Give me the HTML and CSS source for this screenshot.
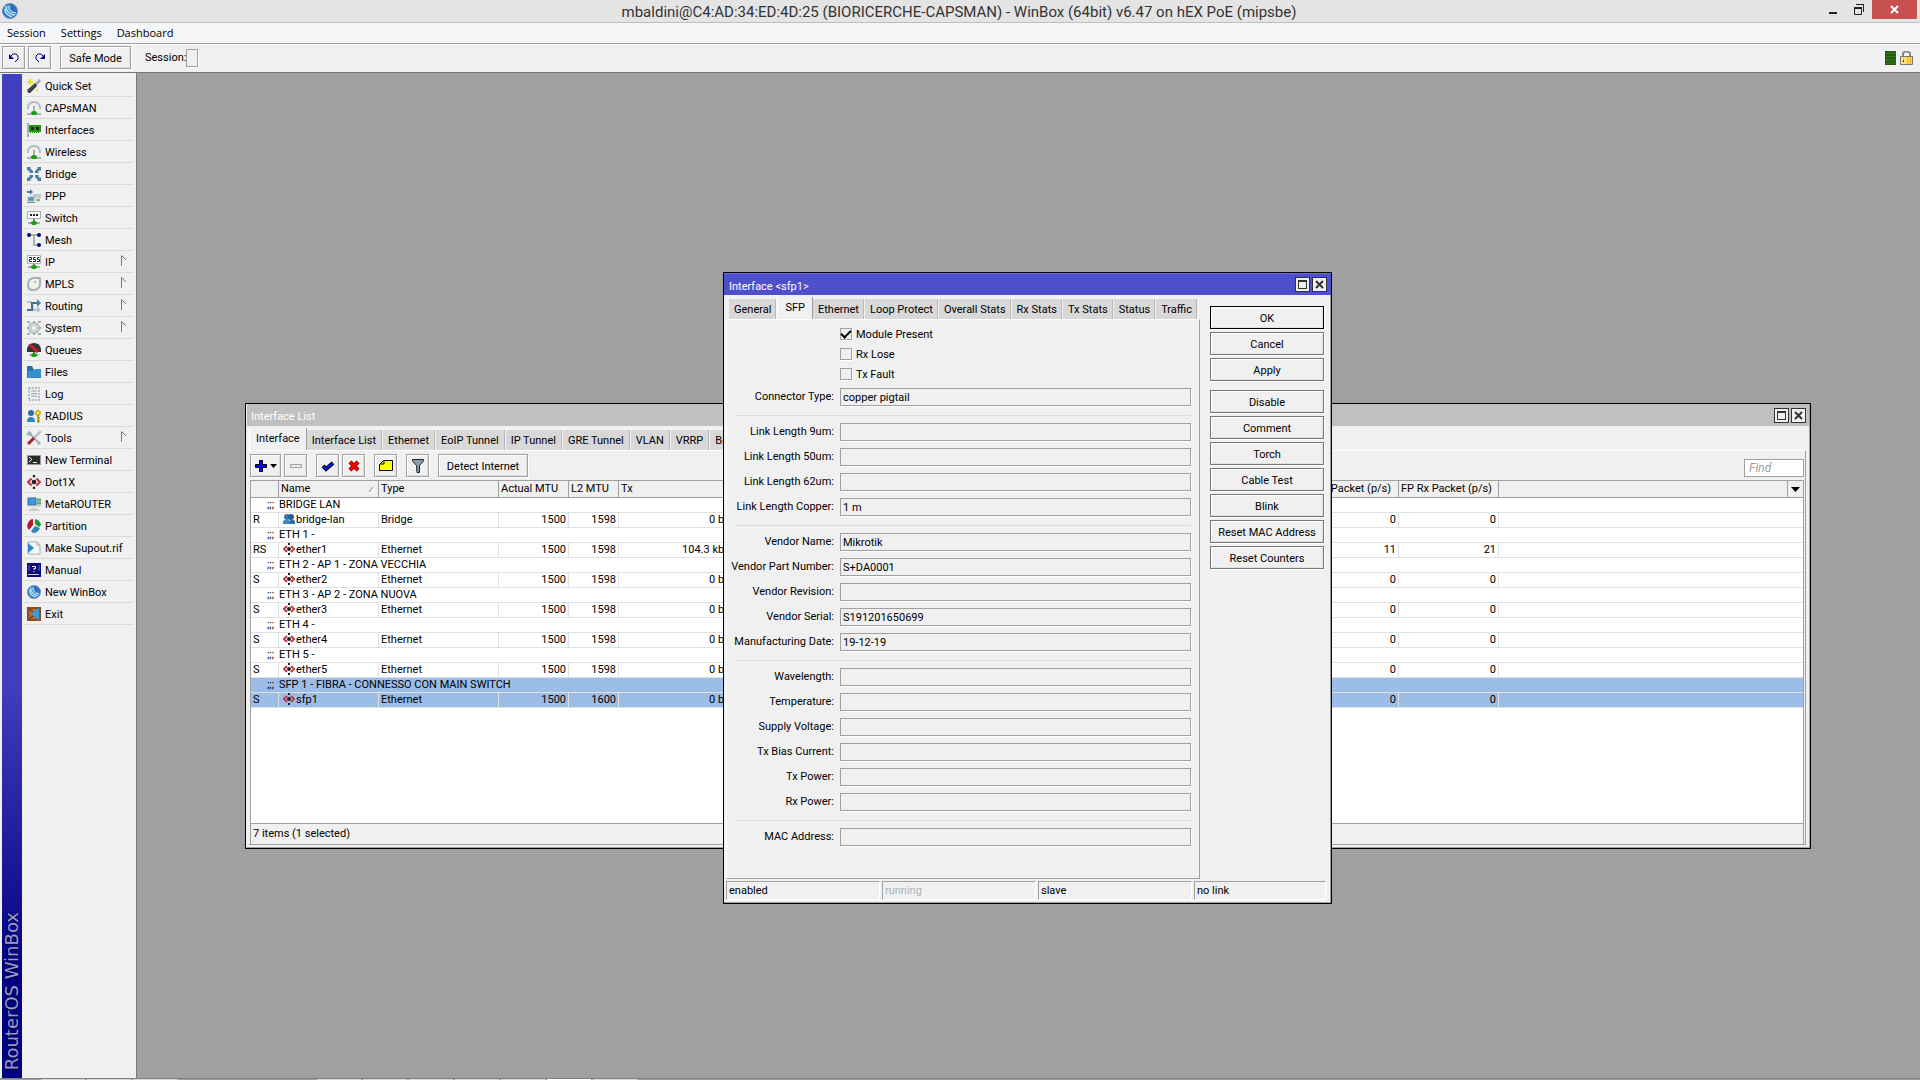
FILE: index.html
```html
<!DOCTYPE html>
<html lang="en">
<head>
<meta charset="utf-8">
<title>WinBox</title>
<link rel="stylesheet" href="styles.css">
</head>
<body>
<svg class="defs" aria-hidden="true">
  <symbol id="i-wand" viewBox="0 0 14 14"><path d="M0 13 L8 5 L10 7 L3 14 Z" fill="#222"/><path d="M0 11 L8 4 L10 6 L3 13 Z" fill="#444"/><path d="M8 4 L12 0 L14 2 L10 6 Z" fill="#999"/><path d="M9 4 L12 1" stroke="#ddd"/><path d="M3 0V6M0 3H6M10 10V12M9 11H11" stroke="#e3e31a" stroke-width="2"/></symbol>
  <symbol id="i-cap" viewBox="0 0 14 14"><path d="M1 8V6Q2 1 7 1T13 6V8" fill="none" stroke="#b4bfbd" stroke-width="2"/><path d="M7 5V11" stroke="#a4b2b0" stroke-width="2"/><path d="M0 13H14" stroke="#777"/><ellipse cx="7" cy="12" rx="3" ry="2" fill="#18a010"/></symbol>
  <symbol id="i-nic" viewBox="0 0 14 14"><path d="M0 0H2V14H0Z" fill="#a4b2b0"/><path d="M2 2H14V9H2Z" fill="#1f9a0c"/><path d="M4 4H7V7H4ZM9 4H12V7H9Z" fill="#222"/><path d="M3 9.500H13" stroke="#1f9a0c" stroke-dasharray="1 1"/></symbol>
  <symbol id="i-bridge" viewBox="0 0 14 14"><g fill="#4e7c9e"><path d="M0 0H4L3 1L6 4V2V6H2L3 5L1 3L0 4Z"/><path d="M14 0H10L11 1L8 4V2V6H12L11 5L13 3L14 4Z"/><path d="M0 14H4L3 13L6 10V12V8H2L3 9L1 11L0 10Z"/><path d="M14 14H10L11 13L8 10V12V8H12L11 9L13 11L14 10Z"/></g></symbol>
  <symbol id="i-ppp" viewBox="0 0 14 14"><path d="M0 3H4" stroke="#4e7c9e" stroke-width="2"/><path d="M3 0L6 3L3 6Z" fill="#4e7c9e"/><path d="M6 5H14V9H6Z" fill="#c2c9c8"/><path d="M1 8H7V12H1Z" fill="#3b99d8" stroke="#a4b2b0"/><path d="M9 9H13V13H9Z" fill="#ddd"/><path d="M9 11H13" stroke="#18a010"/><path d="M0 13.500H8" stroke="#888"/></symbol>
  <symbol id="i-switch" viewBox="0 0 14 14"><path d="M.5 .5H13.500V7.500H.5Z" fill="#fff" stroke="#a4b2b0"/><path d="M3 4H11" stroke="#222" stroke-width="2" stroke-dasharray="2 1"/><path d="M7 8V11" stroke="#777" stroke-width="2"/><path d="M1 12H13" stroke="#666"/><ellipse cx="7" cy="12" rx="3" ry="2" fill="#18a010"/></symbol>
  <symbol id="i-mesh" viewBox="0 0 14 14"><path d="M2 2H12M7 2V12H12" fill="none" stroke="#a4b2b0" stroke-width="2"/><circle cx="2" cy="2" r="2" fill="#0a0a80"/><circle cx="12" cy="2" r="2" fill="#0a0a80"/><circle cx="12" cy="12" r="2" fill="#0a0a80"/></symbol>
  <symbol id="i-ip" viewBox="0 0 14 14"><path d="M.5 .5H13.500V8.500H.5Z" fill="#fff" stroke="#a4b2b0"/><path d="M2 2.500H4.500V4.500H2.500V6.500H5M8.500 2.500H6.500V4.500H8.500V6.500H6M12.500 2.500H10.500V4.500H12.500V6.500H10" fill="none" stroke="#222"/><path d="M7 9V11" stroke="#777" stroke-width="2"/><path d="M1 12H13" stroke="#666"/><ellipse cx="7" cy="12" rx="3" ry="2" fill="#18a010"/></symbol>
  <symbol id="i-mpls" viewBox="0 0 14 14"><path d="M6 1H13V8Q12 13 6 13Q1 13 1 8Q1 2 6 1Z" fill="#eef1f0" stroke="#a4b2b0" stroke-width="2" stroke-linejoin="round"/><circle cx="8" cy="5" r="1" fill="#a4b2b0"/></symbol>
  <symbol id="i-routing" viewBox="0 0 14 14"><path d="M0 3H4L7 11H11" fill="none" stroke="#a9c8dc" stroke-width="2"/><path d="M10 7L14 11L10 14Z" fill="#a9c8dc"/><path d="M0 11H5V4H11" fill="none" stroke="#3f7296" stroke-width="2"/><path d="M10 0L14 4L10 8Z" fill="#2b8ac9"/></symbol>
  <symbol id="i-gear" viewBox="0 0 14 14"><circle cx="7" cy="7" r="5" fill="#eee" stroke="#b4bfbd" stroke-width="2"/><circle cx="7" cy="7" r="3" fill="none" stroke="#b4bfbd"/><path d="M0 1H3M11 1H14M0 13H3M11 13H14M0 7H2M12 7H14M7 0V2M7 12V14" stroke="#a4b2b0" stroke-width="2"/></symbol>
  <symbol id="i-queue" viewBox="0 0 14 14"><path d="M0 9V6Q1 0 7 0T14 6V9Z" fill="#333"/><path d="M3 2L11 9" stroke="#c8202a" stroke-width="3"/><path d="M7 9V12" stroke="#777" stroke-width="2"/><path d="M2 12H12" stroke="#888"/><ellipse cx="7" cy="12" rx="3" ry="2" fill="#18a010"/></symbol>
  <symbol id="i-files" viewBox="0 0 14 14"><path d="M0 1H5L7 5H14V13H0Z" fill="#2373b0"/><path d="M1 13V6H6L8 4H14V12Z" fill="#3a90cc"/></symbol>
  <symbol id="i-log" viewBox="0 0 14 14"><path d="M2 1H12V13H2Z" fill="#eef1f0" stroke="#b4bfbd" stroke-dasharray="2 1" stroke-width="2"/><path d="M4 4H10M4 6.500H10M4 9H10" stroke="#93a3a0"/></symbol>
  <symbol id="i-radius" viewBox="0 0 14 14"><circle cx="4" cy="4" r="3" fill="#2d6f96"/><path d="M0 13Q0 8 4 8T8 13Z" fill="#2f86c0"/><circle cx="11" cy="4" r="2" fill="none" stroke="#c9bb14" stroke-width="2"/><path d="M11 6V14M11 9H13M11 12H13" stroke="#b8a80c" stroke-width="2"/></symbol>
  <symbol id="i-tools" viewBox="0 0 14 14"><path d="M2 2L12 12" stroke="#a4b2b0" stroke-width="2"/><path d="M0 2V4L2 5L5 3L4 1L2 0M10 12L12 14L14 12L12 10" fill="#a4b2b0"/><path d="M7 7L14 0" stroke="#b4bfbd" stroke-width="2"/><path d="M1 13L7 7" stroke="#a8202c" stroke-width="3"/></symbol>
  <symbol id="i-term" viewBox="0 0 14 14"><path d="M0 2H14V12H0Z" fill="#999"/><path d="M1 3H13V11H1Z" fill="#2c2c2c"/><path d="M2 4L5 6.500L2 9M6 9.500H10" fill="none" stroke="#eee"/></symbol>
  <symbol id="i-eth" viewBox="0 0 12 12"><path d="M4 3L1 6L4 9M8 3L11 6L8 9" fill="none" stroke="#c03a4a" stroke-width="2"/><circle cx="6" cy="6" r="2" fill="#222"/><path d="M6 0V2M6 10V12" stroke="#222" stroke-width="2"/></symbol>
  <symbol id="i-meta" viewBox="0 0 14 14"><path d="M1 1H9V8H1Z" fill="#3e9ae0" stroke="#2c6ca0"/><path d="M10 1H14V8H10Z" fill="#b4bfbd"/><path d="M10 3H14M10 6H14" stroke="#18a010"/><path d="M0 9H14" stroke="#bbb"/><path d="M1 14Q2 11 7 11T13 14Z" fill="#c5cdcb"/></symbol>
  <symbol id="i-part" viewBox="0 0 14 14"><path d="M6 0V6L2 11Q-1 8 1 4T6 0Z" fill="#b01c2c"/><path d="M8 0Q13 1 14 6L12 8L8 5Z" fill="#1a9a2a"/><path d="M8 7L13 9Q11 14 6 14L4 12Z" fill="#2d86c4"/></symbol>
  <symbol id="i-supout" viewBox="0 0 14 14"><path d="M1 1H10L13 4V13H1Z" fill="#f6f8f7" stroke="#a4b2b0"/><path d="M10 1V4H13" fill="none" stroke="#a4b2b0"/><path d="M1 2L7 7L1 12Z" fill="#2b88c8"/></symbol>
  <symbol id="i-manual" viewBox="0 0 14 14"><path d="M0 0H14V14H0Z" fill="#0a0a7c"/><path d="M2 2V8M12 2V8" stroke="#6a6ac0"/><path d="M5 3.500H8.500V5.500H7V7M7 8V9" fill="none" stroke="#fff"/><path d="M1 11.500H12" stroke="#ccd"/></symbol>
  <symbol id="i-winbox" viewBox="0 0 16 16"><circle cx="8" cy="8" r="7.500" fill="#2d72b8" stroke="#6b93b8"/><path d="M2 5Q4 2 8 2Q5 8 13 11Q12 14 8 14Q1 12 2 5" fill="#5aa6e2"/><path d="M4 3Q4 11 13 12M7 3Q7 9 14 10M3 6Q3 12 10 14" fill="none" stroke="#e6f3fc"/></symbol>
  <symbol id="i-exit" viewBox="0 0 14 14"><path d="M0 0H14V14H0Z" fill="#8f4e22"/><path d="M2 2H12V12H2Z" fill="#b06a34"/><path d="M2 2L6 5M2 12L6 9" stroke="#4c2a12"/><path d="M12 1V13L4 7Z" fill="#2e9ee0"/></symbol>
  <symbol id="i-people" viewBox="0 0 12 12"><circle cx="4" cy="4" r="3" fill="#3578a4"/><circle cx="8" cy="4" r="3" fill="#235f8a"/><path d="M0 11V8Q4 5 7 8V11Z" fill="#3c8cc4"/><path d="M6 11V8Q10 5 12 8V11Z" fill="#2b74aa"/></symbol>
  <symbol id="i-undo" viewBox="0 0 12 12"><path d="M1 2V7H6Z" fill="#000080"/><path d="M2 5L5 2H8L10 4V7L7 10" fill="none" stroke="#000080"/></symbol>
  <symbol id="i-redo" viewBox="0 0 12 12"><path d="M11 2V7H6Z" fill="#000080"/><path d="M10 5L7 2H4L2 4V7L5 10" fill="none" stroke="#000080"/></symbol>
  <symbol id="i-max" viewBox="0 0 9 9"><path d="M0 0H9V9H0Z" fill="#333"/><path d="M1 2H8V8H1Z" fill="#eee"/></symbol>
  <symbol id="i-x" viewBox="0 0 9 9"><path d="M1 1L8 8M8 1L1 8" stroke="#333" stroke-width="2"/></symbol>
  <symbol id="i-arrow" viewBox="0 0 6 11"><path d="M.5 11V.5L5 5" fill="none" stroke="#777"/><path d="M1 10L5.500 5" stroke="#fff"/></symbol>
</svg>

<div class="app">
  <header class="titlebar">
    <svg class="logo"><use href="#i-winbox"/></svg>
    <h1 class="title">mbaldini@C4:AD:34:ED:4D:25 (BIORICERCHE-CAPSMAN) - WinBox (64bit) v6.47 on hEX PoE (mipsbe)</h1>
    <div class="sysbuttons">
      <button class="sys" aria-label="Minimize"><svg width="12" height="12"><path d="M2 8H10V10H2Z" fill="#222"/></svg></button>
      <button class="sys" aria-label="Restore"><svg width="12" height="12"><path d="M1.500 3.500H8.500V10.500H1.500Z" fill="none" stroke="#222"/><path d="M1 3H9V5H1ZM3 0H11V8H10V1H3Z" fill="#222"/></svg></button>
      <button class="sys sys-close" aria-label="Close"><svg width="9" height="9"><path d="M1 1L8 8M8 1L1 8" stroke="#fff" stroke-width="2"/></svg></button>
    </div>
  </header>

  <nav class="menubar">
    <a href="#">Session</a><a href="#">Settings</a><a href="#">Dashboard</a>
  </nav>

  <div class="toolbar">
    <button class="btn square" aria-label="Undo"><svg width="12" height="12"><use href="#i-undo"/></svg></button>
    <button class="btn square" aria-label="Redo"><svg width="12" height="12"><use href="#i-redo"/></svg></button>
    <button class="btn safe">Safe Mode</button>
    <div class="session-field"><label for="session">Session:</label><input class="session" id="session" readonly></div>
    <div class="indicators">
      <svg width="11" height="14"><path d="M0 0H11V14H0Z" fill="#265a12"/><path d="M1 2H11M1 5.500H11M1 9H11M1 12H11" stroke="#357a1c"/></svg>
      <svg width="13" height="14"><path d="M3 5V2Q6.500-1 10 2V5" fill="none" stroke="#8a8a8a" stroke-width="2"/><path d="M.5 5.500H12.500V13.500H.5Z" fill="#f8d84c" stroke="#777"/><path d="M2 6V13M5 6V13" stroke="#fff3a0"/><path d="M8 6V13M10.500 6V13" stroke="#f0ae30"/><path d="M3 9H4V11H3Z" fill="#333"/></svg>
    </div>
  </div>

  <div class="workspace">
    <div class="brand"><span>RouterOS WinBox</span></div>
    <nav class="sidebar">
      <a href="#"><svg><use href="#i-wand"/></svg>Quick Set</a>
      <a href="#"><svg><use href="#i-cap"/></svg>CAPsMAN</a>
      <a href="#"><svg><use href="#i-nic"/></svg>Interfaces</a>
      <a href="#"><svg><use href="#i-cap"/></svg>Wireless</a>
      <a href="#"><svg><use href="#i-bridge"/></svg>Bridge</a>
      <a href="#"><svg><use href="#i-ppp"/></svg>PPP</a>
      <a href="#"><svg><use href="#i-switch"/></svg>Switch</a>
      <a href="#"><svg><use href="#i-mesh"/></svg>Mesh</a>
      <a href="#"><svg><use href="#i-ip"/></svg>IP<svg class="more"><use href="#i-arrow"/></svg></a>
      <a href="#"><svg><use href="#i-mpls"/></svg>MPLS<svg class="more"><use href="#i-arrow"/></svg></a>
      <a href="#"><svg><use href="#i-routing"/></svg>Routing<svg class="more"><use href="#i-arrow"/></svg></a>
      <a href="#"><svg><use href="#i-gear"/></svg>System<svg class="more"><use href="#i-arrow"/></svg></a>
      <a href="#"><svg><use href="#i-queue"/></svg>Queues</a>
      <a href="#"><svg><use href="#i-files"/></svg>Files</a>
      <a href="#"><svg><use href="#i-log"/></svg>Log</a>
      <a href="#"><svg><use href="#i-radius"/></svg>RADIUS</a>
      <a href="#"><svg><use href="#i-tools"/></svg>Tools<svg class="more"><use href="#i-arrow"/></svg></a>
      <a href="#"><svg><use href="#i-term"/></svg>New Terminal</a>
      <a href="#"><svg><use href="#i-eth"/></svg>Dot1X</a>
      <a href="#"><svg><use href="#i-meta"/></svg>MetaROUTER</a>
      <a href="#"><svg><use href="#i-part"/></svg>Partition</a>
      <a href="#"><svg><use href="#i-supout"/></svg>Make Supout.rif</a>
      <a href="#"><svg><use href="#i-manual"/></svg>Manual</a>
      <a href="#"><svg><use href="#i-winbox"/></svg>New WinBox</a>
      <a href="#"><svg><use href="#i-exit"/></svg>Exit</a>
    </nav>

    <main class="desktop">
      <section class="window list-window">
        <div class="wintitle"><h2>Interface List</h2>
          <button class="winbtn" aria-label="Maximize"><svg width="9" height="9"><use href="#i-max"/></svg></button>
          <button class="winbtn" aria-label="Close"><svg width="9" height="9"><use href="#i-x"/></svg></button>
        </div>
        <div class="tabs">
          <button class="tab active">Interface</button><button class="tab">Interface List</button><button class="tab">Ethernet</button><button class="tab">EoIP Tunnel</button><button class="tab">IP Tunnel</button><button class="tab">GRE Tunnel</button><button class="tab">VLAN</button><button class="tab">VRRP</button><button class="tab">Bonding</button>
        </div>
        <div class="list-panel">
          <div class="list-tools">
            <button class="btn add" aria-label="Add"><svg width="22" height="12"><path d="M4.500 .5H7.500V4.500H11.500V7.500H7.500V11.500H4.500V7.500H.5V4.500H4.500Z" fill="#00f" stroke="#000"/><path d="M15 4H22L18.500 8Z"/></svg></button>
            <button class="btn square group-end" aria-label="Remove"><svg width="12" height="12"><path d="M.5 4.500H11.500V7.500H.5Z" fill="#eee" stroke="#a0a0a0"/></svg></button>
            <button class="btn square" aria-label="Enable"><svg width="12" height="12"><path d="M1 6L4 9L11 3" fill="none" stroke="#000" stroke-width="4"/><path d="M1 6L4 9L11 3" fill="none" stroke="#0026ff" stroke-width="2"/></svg></button>
            <button class="btn square group-end" aria-label="Disable"><svg width="12" height="12"><path d="M2 2L10 10M10 2L2 10" stroke="#400" stroke-width="4"/><path d="M2 2L10 10M10 2L2 10" stroke="#f00" stroke-width="3"/></svg></button>
            <button class="btn square group-end" aria-label="Comment"><svg width="14" height="12"><path d="M.5 10.500V4.500L4.500 .5H13.500V10.500Z" fill="#ff0" stroke="#000"/><path d="M5 1V4H1" fill="none" stroke="#000"/></svg></button>
            <button class="btn square group-end" aria-label="Filter"><svg width="12" height="14"><path d="M.5 .5H11.500V2L7.500 6.500V13.500H5L4.500 6.500L.5 2Z" fill="#8c9ab8" stroke="#222"/></svg></button>
            <button class="btn detect">Detect Internet</button>
            <input class="find" type="text" placeholder="Find" aria-label="Find">
          </div>
          <div class="grid-box">
            <table class="grid">
              <colgroup><col class="c-flag"><col class="c-name"><col class="c-type"><col class="c-mtu"><col class="c-l2"><col class="c-tx"><col class="c-mid"><col class="c-pkt"><col class="c-pkt"><col><col class="c-drop"></colgroup>
              <thead><tr><th></th><th>Name<svg class="sort" width="6" height="7"><path d="M.5 6.500L5.500 .5" stroke="#888"/><path d="M5.500 .5V6.500H0" fill="none" stroke="#fff"/></svg></th><th>Type</th><th>Actual MTU</th><th>L2 MTU</th><th>Tx</th><th></th><th>FP Tx Packet (p/s)</th><th>FP Rx Packet (p/s)</th><th></th><th><button class="drop" aria-label="Columns"><svg width="9" height="5"><path d="M0 0H9L4.500 5Z"/></svg></button></th></tr></thead>
              <tbody>
                <tr class="note"><td colspan="11"><span class="mark">;;;</span>BRIDGE LAN</td></tr>
                <tr><td>R</td><td><svg><use href="#i-people"/></svg>bridge-lan</td><td>Bridge</td><td>1500</td><td>1598</td><td>0 bps</td><td></td><td>0</td><td>0</td><td colspan="2"></td></tr>
                <tr class="note"><td colspan="11"><span class="mark">;;;</span>ETH 1 -</td></tr>
                <tr><td>RS</td><td><svg><use href="#i-eth"/></svg>ether1</td><td>Ethernet</td><td>1500</td><td>1598</td><td>104.3 kbps</td><td></td><td>11</td><td>21</td><td colspan="2"></td></tr>
                <tr class="note"><td colspan="11"><span class="mark">;;;</span>ETH 2 - AP 1 - ZONA VECCHIA</td></tr>
                <tr><td>S</td><td><svg><use href="#i-eth"/></svg>ether2</td><td>Ethernet</td><td>1500</td><td>1598</td><td>0 bps</td><td></td><td>0</td><td>0</td><td colspan="2"></td></tr>
                <tr class="note"><td colspan="11"><span class="mark">;;;</span>ETH 3 - AP 2 - ZONA NUOVA</td></tr>
                <tr><td>S</td><td><svg><use href="#i-eth"/></svg>ether3</td><td>Ethernet</td><td>1500</td><td>1598</td><td>0 bps</td><td></td><td>0</td><td>0</td><td colspan="2"></td></tr>
                <tr class="note"><td colspan="11"><span class="mark">;;;</span>ETH 4 -</td></tr>
                <tr><td>S</td><td><svg><use href="#i-eth"/></svg>ether4</td><td>Ethernet</td><td>1500</td><td>1598</td><td>0 bps</td><td></td><td>0</td><td>0</td><td colspan="2"></td></tr>
                <tr class="note"><td colspan="11"><span class="mark">;;;</span>ETH 5 -</td></tr>
                <tr><td>S</td><td><svg><use href="#i-eth"/></svg>ether5</td><td>Ethernet</td><td>1500</td><td>1598</td><td>0 bps</td><td></td><td>0</td><td>0</td><td colspan="2"></td></tr>
                <tr class="note selected"><td colspan="11"><span class="mark">;;;</span>SFP 1 - FIBRA - CONNESSO CON MAIN SWITCH</td></tr>
                <tr class="selected"><td>S</td><td><svg><use href="#i-eth"/></svg>sfp1</td><td>Ethernet</td><td>1500</td><td>1600</td><td>0 bps</td><td></td><td>0</td><td>0</td><td colspan="2"></td></tr>
              </tbody>
            </table>
            <div class="count">7 items (1 selected)</div>
          </div>
        </div>
      </section>

      <section class="window dialog">
        <div class="wintitle"><h2>Interface &lt;sfp1&gt;</h2>
          <button class="winbtn" aria-label="Maximize"><svg width="9" height="9"><use href="#i-max"/></svg></button>
          <button class="winbtn" aria-label="Close"><svg width="9" height="9"><use href="#i-x"/></svg></button>
        </div>
        <div class="dialog-body">
          <div class="dialog-main">
            <div class="tabs">
              <button class="tab">General</button><button class="tab active">SFP</button><button class="tab">Ethernet</button><button class="tab">Loop Protect</button><button class="tab">Overall Stats</button><button class="tab">Rx Stats</button><button class="tab">Tx Stats</button><button class="tab">Status</button><button class="tab">Traffic</button>
            </div>
            <form class="form">
              <label class="check"><input type="checkbox" checked>Module Present</label>
              <label class="check"><input type="checkbox">Rx Lose</label>
              <label class="check"><input type="checkbox">Tx Fault</label>
              <div class="group">
                <div class="field"><label for="f1">Connector Type:</label><input id="f1" readonly value="copper pigtail"></div>
              </div>
              <div class="group">
                <div class="field"><label for="f2">Link Length 9um:</label><input id="f2" readonly></div>
                <div class="field"><label for="f3">Link Length 50um:</label><input id="f3" readonly></div>
                <div class="field"><label for="f4">Link Length 62um:</label><input id="f4" readonly></div>
                <div class="field"><label for="f5">Link Length Copper:</label><input id="f5" readonly value="1 m"></div>
              </div>
              <div class="group">
                <div class="field"><label for="f6">Vendor Name:</label><input id="f6" readonly value="Mikrotik"></div>
                <div class="field"><label for="f7">Vendor Part Number:</label><input id="f7" readonly value="S+DA0001"></div>
                <div class="field"><label for="f8">Vendor Revision:</label><input id="f8" readonly></div>
                <div class="field"><label for="f9">Vendor Serial:</label><input id="f9" readonly value="S191201650699"></div>
                <div class="field"><label for="f10">Manufacturing Date:</label><input id="f10" readonly value="19-12-19"></div>
              </div>
              <div class="group">
                <div class="field"><label for="f11">Wavelength:</label><input id="f11" readonly></div>
                <div class="field"><label for="f12">Temperature:</label><input id="f12" readonly></div>
                <div class="field"><label for="f13">Supply Voltage:</label><input id="f13" readonly></div>
                <div class="field"><label for="f14">Tx Bias Current:</label><input id="f14" readonly></div>
                <div class="field"><label for="f15">Tx Power:</label><input id="f15" readonly></div>
                <div class="field"><label for="f16">Rx Power:</label><input id="f16" readonly></div>
              </div>
              <div class="group">
                <div class="field"><label for="f17">MAC Address:</label><input id="f17" readonly></div>
              </div>
            </form>
          </div>
          <div class="actions">
            <button class="btn default">OK</button>
            <button class="btn">Cancel</button>
            <button class="btn last">Apply</button>
            <button class="btn">Disable</button>
            <button class="btn">Comment</button>
            <button class="btn">Torch</button>
            <button class="btn">Cable Test</button>
            <button class="btn">Blink</button>
            <button class="btn">Reset MAC Address</button>
            <button class="btn">Reset Counters</button>
          </div>
        </div>
        <div class="states"><span>enabled</span><span class="off">running</span><span>slave</span><span>no link</span></div>
      </section>
    </main>
  </div>
  <div class="edge"><i></i><i></i><i></i><i class="far"></i><i></i><i></i><i></i><i></i><i class="lit"></i><i></i></div>
</div>
</body>
</html>
```
FILE: styles.css
```css
* { box-sizing: border-box; }
body {
  margin: 0;
  font: 11px/15px Roboto, "Liberation Sans", Arial, sans-serif;
  color: #000;
  background: #f0f0f0;
}
button, input { font: inherit; color: inherit; margin: 0; }
button { padding: 0; white-space: nowrap; }
a { color: inherit; text-decoration: none; white-space: nowrap; }
h1, h2 { margin: 0; font: inherit; }
svg { display: block; flex: none; }
.defs { position: absolute; width: 0; height: 0; }

.app { display: flex; flex-direction: column; height: 100vh; overflow: hidden; }

/* Title bar */
.titlebar {
  display: flex;
  align-items: flex-start;
  height: 23px;
  flex: none;
  background: #e4e4e4;
  border-bottom: 1px solid #bcbec0;
}
.logo { width: 16px; height: 16px; margin: 3px 0 0 2px; }
.title { flex: 1; padding-left: 80px; text-align: center; font: 15px/24px Roboto, "Open Sans", sans-serif; color: #333; }
.sysbuttons { display: flex; margin-right: 3px; }
.sys { display: flex; align-items: center; justify-content: center; width: 26px; height: 19px; border: 0; background: none; }
.sys-close { width: 45px; background: #c75050; }

/* Menu and main toolbar */
.menubar {
  display: flex;
  gap: 15px;
  flex: none;
  height: 21px;
  padding-left: 7px;
  background: #f5f6f7;
  border-bottom: 1px solid #a0a0a0;
  font: 11px/20px "Open Sans", "Noto Sans", sans-serif;
}
.toolbar {
  display: flex;
  align-items: center;
  gap: 3px;
  flex: none;
  height: 29px;
  padding: 0 7px 2px 2px;
  border-top: 1px solid #fff;
  border-bottom: 1px solid #787878;
}
.btn {
  display: flex;
  align-items: center;
  justify-content: center;
  height: 23px;
  padding-top: 1px;
  border: 1px solid #a0a0a0;
  background: #f0f0f0;
  box-shadow: inset 1px 1px #fff, inset -1px -1px #e0e0e0, 1px 1px #fff;
}
.square, .add { padding-top: 0; }
.square { width: 23px; }
.safe { width: 71px; margin-left: 6px; }
.session-field { display: flex; align-items: center; margin-left: 11px; }
.session { width: 12px; height: 18px; padding: 0; border: 1px solid #a0a0a0; background: #f0f0f0; box-shadow: 1px 1px #fff; }
.indicators { display: flex; gap: 4px; margin-left: auto; }

/* Sidebar */
.workspace { display: flex; flex: 1; min-height: 0; }
.brand {
  display: flex;
  align-items: flex-end;
  width: 20px;
  margin: 1px 2px 0;
  background: linear-gradient(#4040c0 0, #4040c0 60%, #000080 90%);
}
.brand span {
  writing-mode: vertical-rl;
  transform: rotate(180deg);
  padding-top: 8px;
  font: 18px/20px "DejaVu Sans", sans-serif;
  color: #9a9ac4;
  text-shadow: -1px -1px 1px #000040;
}
.sidebar { width: 113px; padding: 2px 3px 0 0; border-right: 1px solid #787878; }
.sidebar a { display: flex; align-items: center; gap: 4px; height: 22px; padding: 1px 0 0 3px; border-bottom: 1px solid #dcdcdc; }
.sidebar svg { width: 14px; height: 14px; }
.sidebar .more { width: 6px; height: 11px; margin: 0 6px 3px auto; }

/* Windows */
.desktop { position: relative; flex: 1; background: #a0a0a0; overflow: hidden; }
.window {
  position: absolute;
  display: flex;
  flex-direction: column;
  background: #f0f0f0;
  border: 1px solid #000;
  box-shadow: inset -1px -1px #a0a0a0;
}
.list-window { left: 108px; top: 330px; width: 1566px; height: 446px; padding: 0 4px 3px 3px; }
.dialog { left: 586px; top: 199px; width: 609px; height: 632px; padding: 0 5px 3px 2px; }
.wintitle { display: flex; align-items: center; gap: 2px; height: 22px; flex: none; }
.wintitle h2 { flex: 1; padding-top: 3px; color: #fff; }
.winbtn { display: flex; align-items: center; justify-content: center; width: 15px; height: 15px; border: 1px solid #333; background: #f0f0f0; }
.list-window .wintitle { margin: 0 -3px 0 -2px; padding: 0 3px 0 4px; background: #c0c0c0; }
.dialog .wintitle { margin: 0 -5px 0 -2px; padding: 0 4px 0 5px; background: #4e4fcc; border-top: 1px solid #6a6be0; }

.tabs { display: flex; align-items: flex-end; height: 24px; flex: none; }
.tab {
  height: 20px;
  padding: 1px 5px 0;
  border: 0;
  border-right: 1px solid #b8b8b8;
  margin-right: 1px;
  background: #d8d8d8;
}
.dialog .tab { padding: 1px 4px 0 5px; }
.tabs .tab.active { height: 22px; padding: 0 6px 2px; margin-right: 0; border-right-color: #a0a0a0; border-left: 1px solid #fff; background: #f0f0f0; }
.dialog .tabs .tab.active { padding: 0 7px 2px; }

/* Interface list */
.list-panel { display: flex; flex-direction: column; flex: 1; min-height: 0; border: 1px solid #a0a0a0; border-top-color: #fff; border-left: 0; padding: 3px 1px 0; }
.list-tools { display: flex; align-items: center; gap: 3px; height: 23px; margin-bottom: 3px; flex: none; }
.list-tools .group-end { margin-right: 6px; }
.add { width: 31px; }
.detect { width: 90px; }
.find { width: 60px; height: 18px; margin: 4px 0 0 auto; padding: 0 4px; border: 1px solid #a0a0a0; background: #fff; font-size: 12px; }
.find::placeholder { color: #a0a0a0; font-style: italic; opacity: 1; }
.grid-box { display: flex; flex-direction: column; flex: 1; border: 1px solid #a0a0a0; border-bottom: 0; background: #fff; }
.grid { width: 100%; table-layout: fixed; border-collapse: separate; border-spacing: 0; }
.c-flag { width: 28px; }
.c-name, .c-pkt { width: 100px; }
.c-type, .c-tx { width: 120px; }
.c-mtu { width: 70px; }
.c-l2 { width: 50px; }
.c-mid { width: 560px; }
.c-drop { width: 15px; }
.grid th {
  height: 17px;
  padding: 0 2px;
  background: #f0f0f0;
  border-right: 1px solid #a0a0a0;
  border-bottom: 1px solid #a0a0a0;
  font-weight: normal;
  text-align: left;
  line-height: 16px;
  white-space: nowrap;
}
.grid th:last-child { border-right: 0; }
.sort { float: right; margin: 5px 2px 0 0; }
.drop { display: block; margin: 0 auto; border: 0; background: none; }
.grid td {
  height: 15px;
  padding: 0 2px;
  border-right: 1px solid #e0e0e0;
  border-bottom: 1px solid #e0e0e0;
  line-height: 14px;
  white-space: nowrap;
  text-align: right;
}
.grid td:last-child { border-right: 0; }
.grid td:nth-child(-n+3) { text-align: left; }
.grid td svg { display: inline-block; width: 12px; height: 12px; margin: 0 1px 0 2px; vertical-align: top; }
.grid .note td { padding-left: 16px; }
.mark { display: inline-block; width: 12px; }
.selected td { background: #9bbde7; }
.count { margin-top: auto; height: 21px; padding: 2px; border-top: 1px solid #a0a0a0; background: #f0f0f0; }

/* Interface dialog */
.dialog-body { display: flex; flex: 1; min-height: 0; }
.dialog-main { display: flex; flex-direction: column; width: 474px; }
.dialog .tabs { padding-left: 3px; }
.form { flex: 1; padding: 4px 8px 0; border: 1px solid #a0a0a0; border-top-color: #fff; border-left-color: #fff; }
.check { display: flex; align-items: center; gap: 4px; height: 20px; padding-left: 105px; }
.check input {
  appearance: none;
  display: grid;
  place-items: center;
  width: 12px;
  height: 12px;
  border: 1px solid #a0a0a0;
  box-shadow: 1px 1px #fff;
}
.check input:checked::before { content: ""; width: 8px; height: 4px; border: 2px solid #000; border-top: 0; border-right: 0; rotate: -45deg; translate: 0 -1px; }
.group { display: grid; gap: 7px; padding: 7px 0 9px; border-bottom: 1px solid #dcdcdc; }
.check + .group { padding-top: 4px; }
.group:last-child { border: 0; }
.field { display: grid; grid-template-columns: 99px 1fr; gap: 6px; align-items: center; }
.field label { justify-self: end; white-space: nowrap; line-height: 18px; }
.field input { min-width: 0; height: 18px; padding: 1px 2px 0; border: 1px solid #a0a0a0; background: #f0f0f0; box-shadow: 1px 1px #fff; }
.actions { display: flex; flex-direction: column; gap: 3px; flex: 1; padding: 11px 2px 0 10px; }
.actions .btn { border-color: #787878; }
.actions .default { border-color: #000; }
.actions .last { margin-bottom: 6px; }
.states { display: grid; grid-template-columns: 154px 154px 154px 1fr; gap: 2px; margin-top: 2px; }
.states span { height: 19px; padding: 1px 2px; border: 1px solid #a0a0a0; border-right-color: #fff; border-bottom-color: #fff; }
.states .off { color: #b0b0b0; }

/* Strip along the bottom of the screen */
.edge { display: flex; gap: 2px; flex: none; height: 2px; padding-left: 41px; background: #a0a0a0; border-top: 1px solid #808080; }
.edge i { width: 44px; background: #d8d8d8; }
.edge .far { margin-left: 138px; }
.edge .lit { background: #fff; }
```
